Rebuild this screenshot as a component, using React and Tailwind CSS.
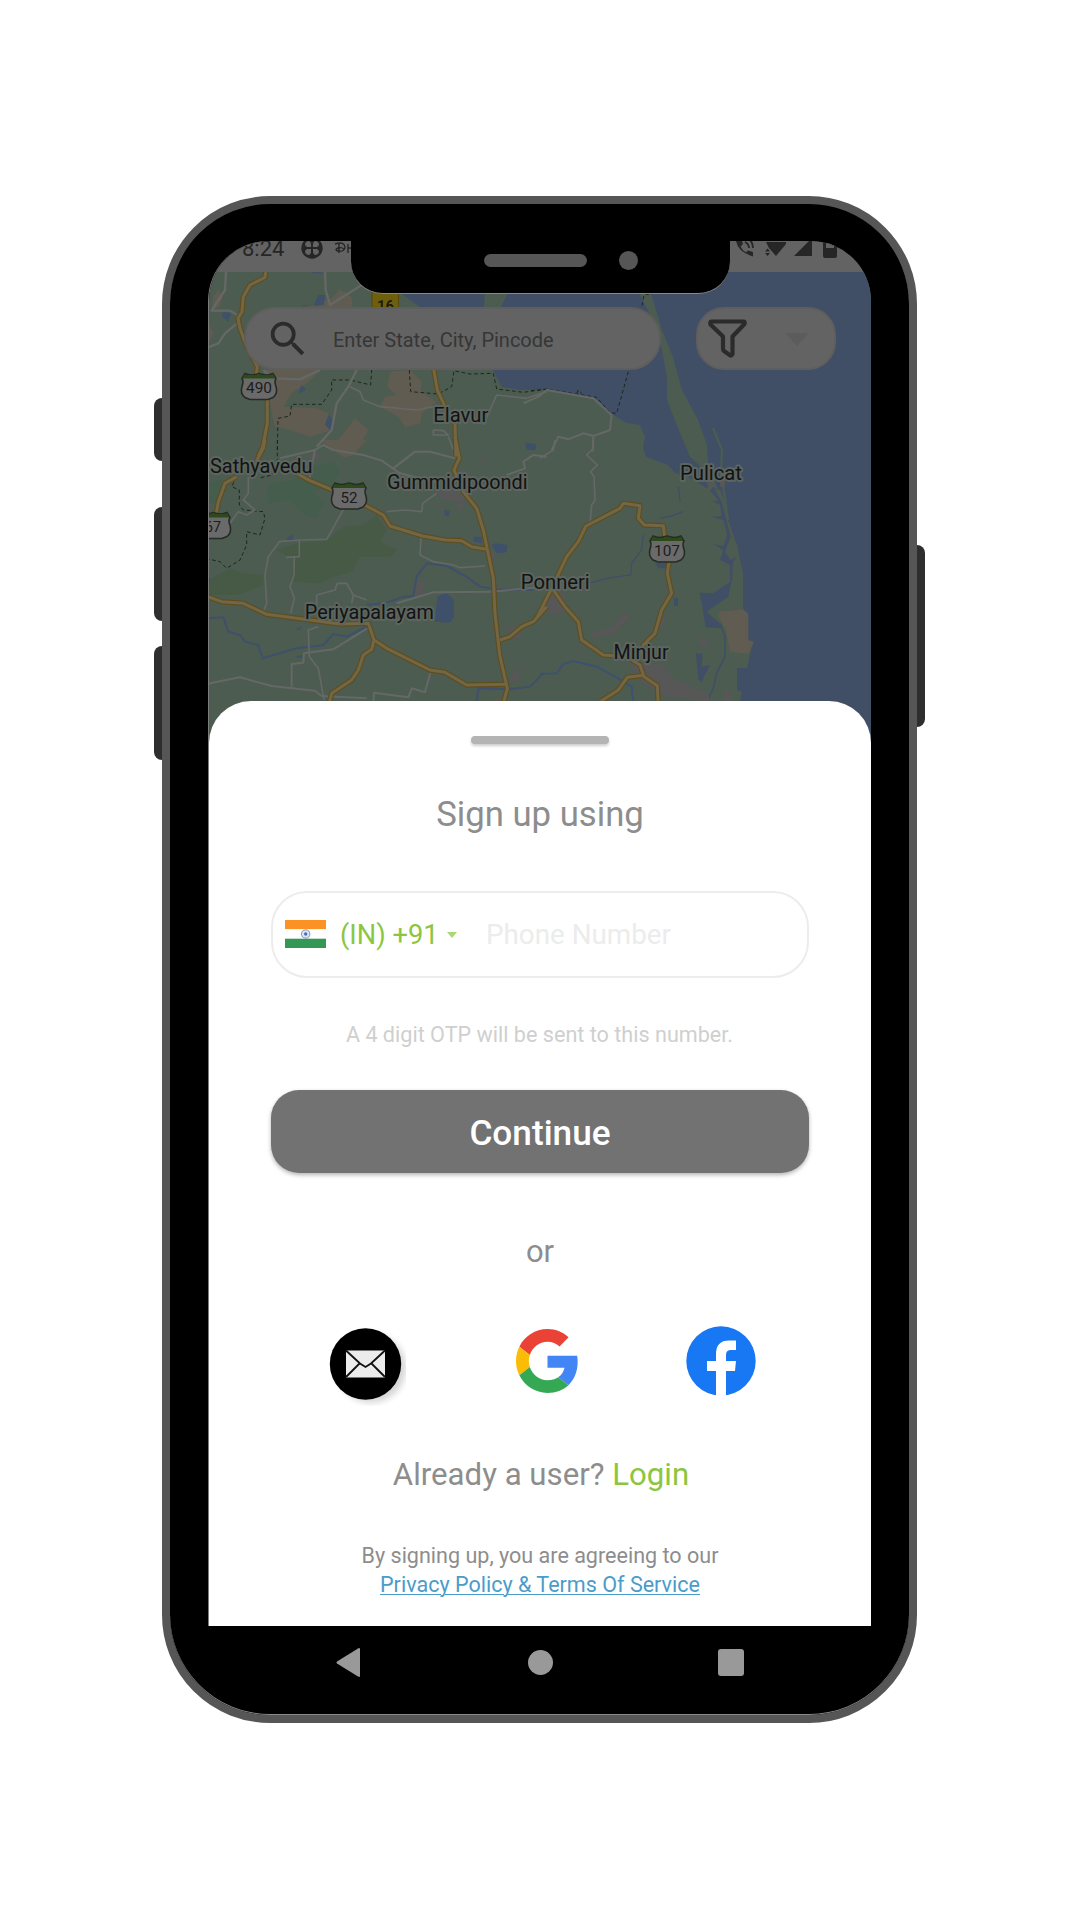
const AREA_A = "translate(150 190) scale(.33333)";
const AREA_B = "translate(530 190) scale(.33333)";
const AREA_C = "translate(200 440) scale(.33333)";
const AREA_D = "translate(540 440) scale(.33333)";

const HIGHWAYS = [
  [AREA_A, "M348,240 L345,262 L300,285 L280,320 L276,365 L264,385 L270,415 L290,470 L322,530 L318,560 L352,625 L352,700 L338,770 L325,800"],
  [AREA_C, "M195,0 L190,25 L170,62 M110,110 L75,130 L55,185 L48,225"],
  [AREA_A, "M850,530 L862,600 L885,650 L915,700 L918,800"],
  [AREA_C, "M765,-10 L778,55 L762,90 L790,155 L830,205 L850,270 L880,415 L885,520 L900,650 L922,745 L905,810"],
  [AREA_C, "M280,95 L330,122 L410,155 M485,190 L550,225 L570,258 L668,288 L735,300 L785,302 L815,320 L858,328"],
  [AREA_C, "M10,465 L65,485 L130,490 L200,523 L330,540 L420,552 L505,550 L522,600 L560,625 L690,690 L735,697 L800,735 L922,733"],
  [AREA_C, "M522,600 L515,628 L490,645 L475,690 L455,720 L395,760 L385,800"],
  [AREA_C, "M900,600 L930,590 L965,560 L1000,545 L1040,500"],
  [AREA_D, "M-10,535 L45,425 L80,350 L115,305 L138,258 L240,205 L250,190 L300,197 L295,235 L313,255 L370,257 L375,300 M388,360 L382,400 L395,460 L365,510 L345,580 L310,615 L297,650"],
  [AREA_D, "M40,450 L75,500 L115,545 L125,600 L190,645 L260,650 L300,675 L312,710 L352,737 L355,800"],
  [AREA_D, "M312,706 L262,712 L235,750 L180,785"],
];

const ROADS = [
  [AREA_A, 7, "M228,245 L225,300 L185,362 L240,362 L268,378 M268,395 L225,430 L205,460 L175,472 M525,245 L527,300 L540,345 L640,282 M340,540 L370,565 L450,568 L510,540 M620,540 L595,590 L560,640 L545,720 L500,770"],
  [AREA_A, 5, "M600,590 L630,605 L640,630 L690,650 L800,660 L850,650 M1000,705 L1040,615 L1130,625 L1190,605 M850,720 L880,722 L895,735 L850,735 Z M895,740 L910,780"],
  [AREA_B, 6, "M-20,640 L25,620 L50,600 L190,625 L245,675 L240,720 L190,738 L160,730 L115,748 L85,740 L65,780 M190,738 L188,785"],
  [AREA_D, 5, "M45,0 L40,30 L0,55 M160,0 L160,25 L140,45 L172,75 L152,95 L162,110 L165,180 L155,195 L150,250"],
  [AREA_C, 6, "M240,55 L345,30 L370,15 L400,30 L490,45 L545,62 L600,100 L720,130 M580,85 L645,35 L690,35 L765,55 M920,105 L975,85 L970,65 L1000,45 L1040,50 M345,30 L328,115"],
  [AREA_C, 5, "M145,110 L145,160 L130,180 L165,210 L140,225 L115,215 L90,250 M435,200 L380,298 L300,300 L238,305 L205,350 L195,405 L200,490 L192,510 M298,300 L298,350 L258,352 M283,352 L282,405 L270,440 L283,475 L272,520"],
  [AREA_C, 5, "M560,215 L615,210 L665,215 L668,190 L710,160 M663,292 L660,345 L700,365 L760,375 L780,383 L855,378 M350,500 L350,465 L405,450 L412,430 L440,430 L460,465 L500,480 M460,465 L455,490"],
  [AREA_C, 6, "M0,750 L30,730 L120,712 L215,738 L345,752 L365,768 L500,775 M520,790 L522,758 L625,772 L635,745 L675,757 L692,695 M275,740 L275,672 L310,668 L312,640 L400,628 L510,560 M590,490 L700,457 L870,455 L1040,440"],
  [AREA_C, 5, "M355,560 L325,570 L328,650 L355,685 L372,780"],
];

const LABELS = [
  ["Elavur", 433.3, 421.7, 55],
  ["Sathyavedu", 210, 472.7, 102.5],
  ["Gummidipoondi", 387, 489.3, 140.5],
  ["Periyapalayam", 304.8, 619, 129],
  ["Ponneri", 520.8, 588.8, 69],
  ["Pulicat", 680, 479.5, 62],
  ["Minjur", 613.6, 659.3, 55],
];

const SHIELDS = [
  ["490", 259, 386.5, 26],
  ["52", 349, 496, 17],
  ["67", 213, 525.5, 16],
  ["107", 667, 549, 26],
];

function Shield({ label, x, y, w }) {
  return (
    <g transform={`translate(${x} ${y})`}>
      <path d="M-14,-13 Q-8,-10 0,-13 Q8,-10 14,-13 L17,-8 Q15,-5 17,0 Q19,7 14,11 L9,13 H-9 L-14,11 Q-19,7 -17,0 Q-15,-5 -17,-8 Z" fill="#6a6a6a" stroke="#262b27" strokeWidth="1.6" />
      <path d="M-14,-12.5 Q-8,-9.5 0,-12.5 Q8,-9.5 14,-12.5 L16.4,-8 H-16.4 Z" fill="#2c4a1a" />
      <text x={-w / 2} y="6.5" textLength={w} lengthAdjust="spacingAndGlyphs" fontSize="15.5" fill="#1c1c1c">{label}</text>
    </g>
  );
}

function MapView() {
  return (
    <svg className="absolute -left-px top-[31px] h-[488px] w-[663px]" viewBox="208 272 663 488" fontFamily="Roboto, sans-serif">
      <rect x="200" y="260" width="680" height="510" fill="#4c5c50" />

      {/* forest */}
      <g transform={AREA_C} fill="#475a46">
        <path d="M200,135 L280,120 L330,85 L400,65 L420,90 L400,130 L340,155 L370,190 L350,235 L310,220 L270,180 L205,190 Z" fill="#455d4c" />
        <path d="M25,130 L60,120 L80,150 L40,190 L25,190 Z" fill="#455d4c" />
        <path d="M230,330 L290,310 L380,300 L430,260 L490,255 L530,225 L560,270 L540,305 L590,330 L570,350 L480,350 L455,395 L400,410 L360,430 L270,425 L285,360 Z" />
        <path d="M25,420 L90,385 L130,400 L190,405 L190,435 L110,465 L25,465 Z" />
      </g>

      {/* sea, lagoon and the sand bar */}
      <path d="M395,272 L402,294 L417,305 L450,330 L493,370 L502,387 L520,390 L547,390 L593,398 L613,415 L627,423 L640,425 L645,437 L643,447 L646,457 L657,461 L668,465 L675,473 L690,478 L707,488 L720,490 L724,500 L728,520 L737,545 L743,573 L743,610 L748,613 L748,640 L753,642 L747,668 L737,668 L737,690 L742,692 L738,710 L730,760 L880,760 L880,260 Z" fill="#404f66" />
      <path d="M638,290 L650,290 L662,330 L673,357 L682,390 L698,420 L707,445 L708,462 L718,490 L708,484 L700,466 L690,457 L683,440 L676,423 L667,400 L667,377 L662,350 L650,315 Z" fill="#4c5c50" />
      <path d="M713,428 L722,450 L721,472 L728,520" fill="none" stroke="#4c5c50" strokeWidth="2.2" />
      <path d="M485,290 L509,290 L500,310 L484,310 Z" fill="#4c5c50" />
      <g transform={AREA_D} fill="#404f66">
        <path d="M505,145 L525,150 L545,185 L562,250 L572,290 L555,335 L572,360 L590,350 L578,370 L577,410 L565,470 L500,515 L545,555 L540,565 L497,562 L485,490 L478,458 L520,460 L570,425 L570,375 L540,360 L550,330 L520,312 L550,318 L562,285 L550,240 L515,230 L545,228 L540,195 L515,182 L535,182 Z" />
        <path d="M468,640 L488,642 L485,680 L510,675 L485,725 L475,720 Z" />
        <path d="M345,368 H380 V385 H355 Z" />
        <path d="M400,473 H414 V498 H403 Z" />
        <path d="M542,555 L555,590 L555,650 L530,700 L520,745 L500,790" fill="none" stroke="#404f66" strokeWidth="5" />
        <path d="M415,140 L420,185 M430,215 L395,228 L360,235 M310,285 L305,330 L275,370 L272,405 L200,415 L155,428 L130,425" fill="none" stroke="#404f66" strokeWidth="4" />
        <path d="M0,702 L50,700 L70,672 L100,663 L170,680 L230,712 L275,740 L280,790" fill="none" stroke="#3e5170" strokeWidth="6" />
      </g>

      {/* open ground and built-up areas */}
      <g transform={AREA_A} fill="#605c51">
        <path d="M205,300 L218,320 L210,350 L185,360 L190,320 Z" />
        <path d="M470,350 L545,325 L570,298 L605,320 L608,352 Z" />
        <path d="M175,395 L190,430 L175,460 Z" />
        <path d="M340,540 L515,540 L470,580 L425,610 L400,650 L500,655 L535,670 L545,720 L480,740 L420,720 L375,710 L360,640 Z" />
        <path d="M720,545 L780,540 L815,575 L812,605 L860,635 L815,670 L812,700 L765,712 L745,680 L690,650 L705,620 L740,615 L712,590 Z" />
        <path d="M615,685 L655,720 L630,765 L590,775 L550,770 Z" />
        <path d="M320,770 L345,745 L345,780 Z" fill="#5a5758" />
      </g>
      <g transform={AREA_C} fill="#605c51">
        <path d="M360,0 H500 L455,48 L430,52 L395,25 Z" />
        <g fill="#575757">
          <path d="M340,35 L370,60 L325,58 Z" />
          <path d="M700,150 L790,85 L830,130 L835,155 L790,185 L730,180 Z" />
          <path d="M705,185 L725,195 L708,203 Z M770,190 L805,190 L770,218 Z M830,58 L857,58 V73 Z M650,425 L675,425 L665,468 L645,468 Z" />
          <path d="M870,335 L893,338 L870,375 Z M918,558 L965,562 L960,598 L930,600 Z M955,672 L958,725 L925,722 Z M180,20 L175,60 L155,60 Z M890,770 L920,790 H870 Z" />
        </g>
      </g>
      <g transform={AREA_D}>
        <path d="M540,515 L610,508 L625,525 L625,600 L642,605 L625,642 L570,635 L558,570 L535,530 Z" fill="#605c51" />
        <g fill="#575757">
          <path d="M0,510 L35,455 L78,460 L72,515 L40,525 L10,515 Z" />
          <path d="M155,575 L215,562 L255,518 L270,532 L220,582 L155,595 Z" />
          <path d="M270,670 L370,672 L400,715 L505,760 L510,785 L380,770 L290,720 Z" />
          <path d="M472,595 L495,590 L512,615 L480,620 Z M553,752 L573,750 V785 H548 Z M500,125 L523,135 L508,155 Z M540,120 H555 V140 H540 Z M390,440 L398,480 L372,480 Z M360,535 L384,530 L358,575 Z M113,625 L125,610 L135,622 Z" />
        </g>
      </g>

      {/* lakes and rivers */}
      <g transform={AREA_A} fill="#3f506b">
        <path d="M505,315 L525,315 L522,345 L490,348 Z M460,345 L490,348 H455 Z M220,365 L242,370 L235,395 L215,378 Z M455,585 L468,600 L445,612 Z M535,675 L550,690 L545,725 L525,705 Z M485,243 H515 V250 H490 Z M1125,758 L1160,768 L1155,780 H1130 Z" />
      </g>
      <g transform={AREA_C} fill="#3f506b">
        <path d="M260,295 L278,283 L280,303 H262 Z M735,208 L750,215 L745,230 L733,225 Z M820,290 H845 V310 L822,305 Z M875,315 L885,310 L922,315 L920,337 L890,340 Z M975,8 L1008,12 L1005,30 L985,22 Z M285,570 L308,558 L300,570 Z M285,650 L308,645 L305,655 Z M25,405 L32,420 L25,445 Z M740,459 L762,480 V530 L750,548 L705,545 L712,470 Z" />
        <path d="M20,535 L70,532 L85,575 L120,585 L135,605 L175,615 L188,655 L290,625 L370,615 L400,582 L440,590 L500,560 M500,495 L560,488 L610,470 L640,468 L650,410 L680,370 L740,378 L800,410 L840,440 L890,448 L1000,450 M1030,700 L990,740 L930,748 L835,745 L830,790" fill="none" stroke="#3f506b" strokeWidth="6" />
      </g>

      {/* district boundaries */}
      <g fill="none" stroke="#1d261f" strokeWidth="3" strokeDasharray="11 8">
        <path transform={AREA_A} d="M382,780 L384,685 L420,678 L425,643 L515,643 L545,600 L545,570 L600,570 L662,585 L665,540 M778,540 L782,605 L865,612 L905,590 L912,542 L960,552 L1030,550 L1040,597 L1120,607 L1190,597" />
        <path transform={AREA_B} d="M358,312 L342,315 L335,352 M295,545 L260,670 L240,668 L200,622 L140,612 L50,598 L0,602 M140,610 L145,600 L155,610" />
        <path transform={AREA_C} d="M232,0 V80 L215,105 L175,115 M110,110 L95,140 L118,150 L118,195 L130,210 L190,215 L195,235 L180,285 L140,275 L140,315 L120,360 L80,385 L60,365 L25,357" />
      </g>

      {ROADS.map(([area, width, d]) => (
        <path key={d} transform={area} d={d} fill="none" stroke="#656866" strokeWidth={width} strokeLinejoin="round" />
      ))}
      {HIGHWAYS.map(([area, d]) => (
        <path key={d} transform={area} d={d} fill="none" stroke="#5f4d20" strokeWidth="16" strokeLinejoin="round" />
      ))}
      {HIGHWAYS.map(([area, d]) => (
        <path key={d} transform={area} d={d} fill="none" stroke="#736643" strokeWidth="9" strokeLinejoin="round" />
      ))}

      <rect x="372" y="284" width="26.5" height="34" rx="3" fill="#6d5f0c" stroke="#54490f" strokeWidth="1" />
      <text x="377" y="311.5" textLength="17" lengthAdjust="spacingAndGlyphs" fontSize="17" fontWeight="500" fill="#151515">16</text>
      {SHIELDS.map(([label, x, y, w]) => (
        <Shield key={label} label={label} x={x} y={y} w={w} />
      ))}
      {LABELS.map(([name, x, y, w]) => (
        <text key={name} x={x} y={y} textLength={w} lengthAdjust="spacingAndGlyphs" fontSize="21" fill="#131313" stroke="#5c655f" strokeWidth="4" strokeLinejoin="round" paintOrder="stroke">
          {name}
        </text>
      ))}
    </svg>
  );
}

function StatusBar() {
  return (
    <div className="relative z-10 -ml-px flex h-[31px] shrink-0 items-start overflow-hidden bg-[#636363] text-[#262626]">
      <span className="-mt-[3px] ml-[34px] w-[41px] text-[22px] leading-[22px]">8:24</span>
      <svg className="-mt-[4px] ml-[18px] h-[22px] w-[22px]" viewBox="0 0 22 22">
        <circle cx="11" cy="11" r="10.7" fill="#262626" />
        <g fill="#636363">
          <path d="M10,10 H6 Q4,9 4,7 Q5,4 8,4 Q10,5 10,7 Z" />
          <path d="M12,10 H16 Q18,9 18,7 Q17,4 14,4 Q12,5 12,7 Z" />
          <path d="M10,12 H6 Q4,13 4,15 Q5,18 8,18 Q10,17 10,15 Z" />
          <path d="M12,12 H16 Q18,13 18,15 Q17,18 14,18 Q12,17 12,15 Z" />
        </g>
      </svg>
      <svg className="ml-[11px] h-[14px] w-[20px]" viewBox="0 0 20 14" fill="none" stroke="#262626" strokeWidth="1.4">
        <path d="M1,3 Q10,0 11,6 Q11,11 4,10 Q0,9 4,7 Q8,6 10,8 M5,3 V12 M14,3 V12 M14,7 H18 M18,3 V12" />
      </svg>
      <svg className="ml-[381px] h-[17px] w-[102px]" viewBox="0 0 102 17" fill="#262626">
        <path d="M1,0 Q3,11 18,15.5 V11 L13,9.5 L11,11.5 Q7,9 5.500,5.500 L8,3 L7,0 Z" />
        <path d="M10,1 Q14,3 14,7 M12,-3 Q18,0 18,7" fill="none" stroke="#262626" strokeWidth="1.8" />
        <path d="M31,1 H51 V3 L41,15 L34,7 Z M30,10.500 L32.500,7.500 L35,10.500 Z M30,12 L32.500,15 L35,12 Z" />
        <path d="M59,15 L77,-3 V15 Z" />
        <path d="M88,-3 H102 V15 Q102,17 100,17 H90 Q88,17 88,15 Z" />
        <path d="M91,2 H99 V7 H91 Z" fill="#636363" />
      </svg>
    </div>
  );
}

function SearchRow() {
  return (
    <div className="relative z-10 ml-[35px] mt-[35px] flex gap-[35px]">
      <div className="flex h-[63px] w-[417px] items-center rounded-[31px] border-2 border-[#5e5e5e] bg-[#636363] pl-[19px]">
        <svg className="h-[46px] w-[46px] shrink-0" viewBox="0 0 24 24" fill="#2b2b2b">
          <path d="M15.5 14h-.79l-.28-.27A6.471 6.471 0 0 0 16 9.500 6.500 6.500 0 1 0 9.500 16c1.610 0 3.090-.59 4.230-1.570l.27.28v.79l5 4.990L20.490 19l-4.990-5zm-6 0C7.010 14 5 11.990 5 9.500S7.010 5 9.500 5 14 7.010 14 9.500 11.990 14 9.500 14z" />
        </svg>
        <span className="ml-[22px] mt-[2px] whitespace-nowrap text-[20px] text-[#363636]">Enter State, City, Pincode</span>
      </div>
      <div className="flex h-[63px] w-[140px] items-center rounded-[28px] border-2 border-[#5e5e5e] bg-[#636363] pl-[10px]">
        <svg className="h-[39px] w-[39px]" viewBox="0 0 39 39" fill="none" stroke="#2b2b2b" strokeWidth="4.2" strokeLinejoin="round">
          <path d="M3,2.500 H36 Q37,2.500 36.500,5 L24.500,17.500 V35 Q23.500,37 22,36.300 L16,32 Q15,31 15,29.500 V17.500 L2.500,5.500 Q2,2.500 3,2.500 Z" />
        </svg>
        <div className="ml-[38px] mt-[2px] h-0 w-0 border-x-[12.5px] border-t-[13px] border-x-transparent border-t-[#5c5c5c]" />
      </div>
    </div>
  );
}

function IndiaFlag() {
  return (
    <svg className="-mt-[2px] h-[28px] w-[41px] shrink-0" viewBox="0 0 41 28">
      <rect width="41" height="9.300" fill="#fb9223" />
      <rect y="9.300" width="41" height="9.400" fill="#fff" />
      <rect y="18.700" width="41" height="9.300" fill="#349754" />
      <circle cx="20.700" cy="14" r="4.100" fill="#dfe6f2" stroke="#7e98c8" strokeWidth="1" />
      <circle cx="20.700" cy="14" r="1.700" fill="#4a6fb3" />
    </svg>
  );
}

function PhoneField() {
  return (
    <div className="mt-[53px] flex h-[87px] w-[538px] shrink-0 items-center rounded-[36px] border-2 border-[#ececec] pl-[12px]">
      <IndiaFlag />
      <span className="ml-[14px] mt-[2px] w-[99px] whitespace-nowrap text-[27.3px] text-[#8cc641]">(IN) +91</span>
      <div className="ml-[8px] h-0 w-0 border-x-[5.5px] border-t-[6px] border-x-transparent border-t-[#a9d773]" />
      <span className="ml-[29px] mt-[1px] whitespace-nowrap text-[27.8px] text-[#ececec]">Phone Number</span>
    </div>
  );
}

function SocialRow() {
  return (
    <div className="mt-[54px] flex h-[76px] w-full items-start">
      <svg className="ml-[117px] h-[80px] w-[80px]" viewBox="0 0 80 80">
        <defs>
          <filter id="soft" x="-20%" y="-20%" width="150%" height="150%">
            <feGaussianBlur stdDeviation="3" />
          </filter>
        </defs>
        <circle cx="45" cy="42" r="35" fill="#000" opacity=".16" filter="url(#soft)" />
        <circle cx="39.500" cy="38" r="35.700" fill="#000" />
        <rect x="20" y="24.500" width="39" height="27" fill="#ececec" />
        <path d="M20,24.500 L34,37.500 L39.500,41 L45,37.500 L59,24.500 M34,37 L20,51 M45,37 L59,51" fill="none" stroke="#111" strokeWidth="1.800" />
      </svg>
      <svg className="ml-[110px] mt-[3px] h-[64px] w-[63px]" viewBox="0 0 48 48" preserveAspectRatio="none">
        <path fill="#EA4335" d="M24 9.500c3.540 0 6.710 1.220 9.210 3.600l6.850-6.850C35.900 2.380 30.470 0 24 0 14.620 0 6.510 5.380 2.560 13.220l7.980 6.190C12.430 13.720 17.740 9.500 24 9.500z" />
        <path fill="#4285F4" d="M46.980 24.550c0-1.570-.15-3.090-.38-4.550H24v9.020h12.940c-.58 2.960-2.260 5.480-4.780 7.180l7.730 6c4.510-4.180 7.090-10.360 7.090-17.650z" />
        <path fill="#FBBC05" d="M10.530 28.590c-.48-1.450-.76-2.990-.76-4.590s.27-3.140.76-4.590l-7.980-6.190C.92 16.460 0 20.120 0 24c0 3.880.92 7.540 2.560 10.780l7.970-6.190z" />
        <path fill="#34A853" d="M24 48c6.480 0 11.930-2.130 15.890-5.810l-7.730-6c-2.150 1.450-4.920 2.300-8.160 2.300-6.260 0-11.570-4.220-13.470-9.910l-7.980 6.190C6.510 42.620 14.620 48 24 48z" />
      </svg>
      <svg className="ml-[107px] h-[70px] w-[70px]" viewBox="0 0 70 70">
        <circle cx="35" cy="35" r="34.700" fill="#1877f2" />
        <path d="M30,70 V45 H21 V35 H30 V28 Q30,14.500 43,14.500 H50 V24 H45 Q40,24 40,29 V35 H50 L49,45 H40 V70 Z" fill="#fff" />
      </svg>
    </div>
  );
}

function SignUpSheet() {
  return (
    <div className="relative z-10 mt-auto flex h-[925px] shrink-0 flex-col items-center rounded-t-[42px] bg-white text-[#8d8d8d]">
      <div className="mt-[35px] h-[8px] w-[138px] shrink-0 rounded-[4px] bg-[#b4b4b4] shadow-[0_2px_3px_rgba(0,0,0,0.2)]" />
      <h1 className="mt-[48px] h-[46px] whitespace-nowrap text-[34.7px] leading-[45px]">Sign up using</h1>
      <PhoneField />
      <p className="mt-[43px] h-[28px] whitespace-nowrap pr-px text-[21.6px] leading-[28px] text-[#cfcfcf]">A 4 digit OTP will be sent to this number.</p>
      <button className="mt-[41px] h-[83px] w-[538px] shrink-0 rounded-[28px] bg-[#727272] pt-[4px] text-[35.2px] font-medium text-white shadow-[0_2px_4px_rgba(0,0,0,0.3)]">
        Continue
      </button>
      <p className="mt-[59px] h-[40px] text-[31px] leading-[40px]">or</p>
      <SocialRow />
      <p className="mt-[53px] h-[40px] whitespace-nowrap pl-[2px] text-[31.2px] leading-[40px]">
        Already a user? <a className="text-[#8cc641]">Login</a>
      </p>
      <p className="mt-[46px] h-[29px] whitespace-nowrap text-[21.55px] leading-[29px]">By signing up, you are agreeing to our</p>
      <a className="h-[29px] whitespace-nowrap text-[21.55px] leading-[29px] text-[#4a9cca] underline decoration-1 underline-offset-2">Privacy Policy &amp; Terms Of Service</a>
    </div>
  );
}

function NavBar() {
  return (
    <div className="mt-[22px] flex h-[29px] w-[663px] items-center">
      <svg className="ml-[128px] h-[29px] w-[24px]" viewBox="0 0 24 29">
        <path d="M24,1 V28 Q24,29.500 22,28.500 L1,15.500 Q0,14.500 1,13.500 L22,.5 Q24,-.5 24,1 Z" fill="#999" />
      </svg>
      <div className="ml-[168px] h-[25px] w-[25px] rounded-full bg-[#999]" />
      <div className="ml-[165px] h-[27px] w-[26px] rounded-[3px] bg-[#999]" />
    </div>
  );
}

export default function App() {
  return (
    <div className="flex h-[1920px] w-[1080px] bg-white font-['Roboto',sans-serif]">
      <div className="ml-[154px] flex w-[8px] shrink-0 flex-col pt-[398px]">
        <div className="h-[63px] rounded-l-[8px] bg-[#2e2e2e]" />
        <div className="mt-[46px] h-[114px] rounded-l-[8px] bg-[#2e2e2e]" />
        <div className="mt-[25px] h-[114px] rounded-l-[8px] bg-[#2e2e2e]" />
      </div>
      <div className="mt-[196px] h-[1527px] w-[755px] shrink-0 rounded-[108px] border-8 border-[#565656] bg-black pl-[38px] pt-[37px] shadow-[inset_0_-1px_0_#8a8a8a]">
        <div className="relative flex h-[1385px] w-[663px] flex-col overflow-hidden rounded-t-[60px] border-l border-[#7c7c7c]">
          <MapView />
          <StatusBar />
          <SearchRow />
          <SignUpSheet />
          <div className="absolute left-[142px] top-0 z-20 flex h-[53px] w-[379px] items-start rounded-b-[32px] border-b border-[#8a8a8a] bg-black">
            <div className="ml-[133px] mt-[13px] h-[13px] w-[103px] rounded-full bg-[#565656]" />
            <div className="ml-[32px] mt-[10px] h-[19px] w-[19px] rounded-full bg-[#565656]" />
          </div>
        </div>
        <NavBar />
      </div>
      <div className="mt-[545px] h-[182px] w-[8px] rounded-r-[8px] bg-[#2e2e2e]" />
    </div>
  );
}
